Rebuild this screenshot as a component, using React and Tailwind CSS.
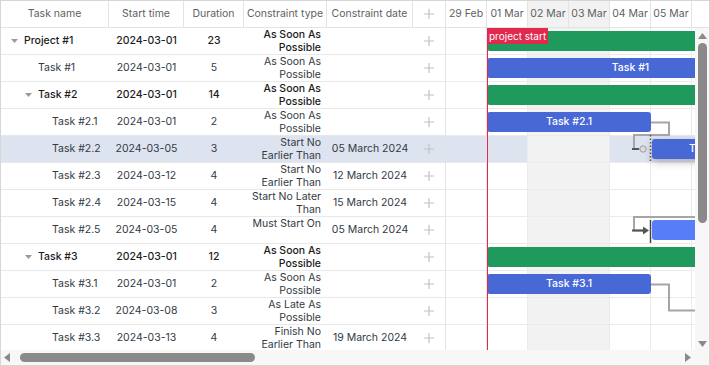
import React from 'react';

const tasks = [
  { name: 'Project #1', start: '2024-03-01', dur: 23, ct: ['As Soon As', 'Possible'], date: '', level: 0, parent: true },
  { name: 'Task #1', start: '2024-03-01', dur: 5, ct: ['As Soon As', 'Possible'], date: '', level: 1 },
  { name: 'Task #2', start: '2024-03-01', dur: 14, ct: ['As Soon As', 'Possible'], date: '', level: 1, parent: true },
  { name: 'Task #2.1', start: '2024-03-01', dur: 2, ct: ['As Soon As', 'Possible'], date: '', level: 2 },
  { name: 'Task #2.2', start: '2024-03-05', dur: 3, ct: ['Start No', 'Earlier Than'], date: '05 March 2024', level: 2, selected: true },
  { name: 'Task #2.3', start: '2024-03-12', dur: 4, ct: ['Start No', 'Earlier Than'], date: '12 March 2024', level: 2 },
  { name: 'Task #2.4', start: '2024-03-15', dur: 4, ct: ['Start No Later', 'Than'], date: '15 March 2024', level: 2 },
  { name: 'Task #2.5', start: '2024-03-05', dur: 4, ct: ['Must Start On'], date: '05 March 2024', level: 2 },
  { name: 'Task #3', start: '2024-03-01', dur: 12, ct: ['As Soon As', 'Possible'], date: '', level: 1, parent: true },
  { name: 'Task #3.1', start: '2024-03-01', dur: 2, ct: ['As Soon As', 'Possible'], date: '', level: 2 },
  { name: 'Task #3.2', start: '2024-03-08', dur: 3, ct: ['As Late As', 'Possible'], date: '', level: 2 },
  { name: 'Task #3.3', start: '2024-03-13', dur: 4, ct: ['Finish No', 'Earlier Than'], date: '19 March 2024', level: 2 },
];

// last column runs under the scrollbar, its label is not shown
const days = ['29 Feb', '01 Mar', '02 Mar', '03 Mar', '04 Mar', '05 Mar', ''];
const weekend = [2, 3];

// bars in timeline coordinates (day width 41px, row height 27px)
const bars = [
  { row: 0, left: 41, width: 420, color: 'bg-[#1f9a5c]', label: '' },
  { row: 1, left: 41, width: 287, color: 'bg-[#4868d6]', label: 'Task #1' },
  { row: 2, left: 41, width: 420, color: 'bg-[#1f9a5c]', label: '' },
  { row: 3, left: 41, width: 164, color: 'bg-[#4868d6]', label: 'Task #2.1' },
  { row: 4, left: 206, width: 123, color: 'bg-[#4868d6] shadow-[0_3px_8px_rgba(0,0,0,0.25)]', label: 'Task #2.2' },
  { row: 7, left: 206, width: 164, color: 'bg-[#587ef7]', label: '' },
  { row: 8, left: 41, width: 420, color: 'bg-[#1f9a5c]', label: '' },
  { row: 9, left: 41, width: 164, color: 'bg-[#4868d6]', label: 'Task #3.1' },
];

const PlusIcon = () => (
  <svg width="10" height="10" viewBox="0 0 10 10">
    <path d="M5 0V10M0 5H10" stroke="#c2c2c2" strokeWidth="1.2" />
  </svg>
);

const Toggle = () => (
  <svg width="7" height="4" viewBox="0 0 7 4" className="ml-[3px]">
    <path d="M0 0H7L3.5 4Z" fill="#9a9a9a" />
  </svg>
);

const GridHeader = () => (
  <div className="flex h-[27px] border-b border-[#e3e3e3] text-[#5f5f5f]">
    <div className="w-[108px] border-r border-[#e3e3e3] flex items-center justify-center">Task name</div>
    <div className="w-[75px] border-r border-[#e3e3e3] flex items-center justify-center">Start time</div>
    <div className="w-[60px] border-r border-[#e3e3e3] flex items-center justify-center">Duration</div>
    <div className="w-[83px] border-r border-[#e3e3e3] flex items-center justify-center whitespace-nowrap">Constraint type</div>
    <div className="w-[86px] border-r border-[#e3e3e3] flex items-center justify-center whitespace-nowrap">Constraint date</div>
    <div className="w-[33px] border-r border-[#e3e3e3] flex items-center justify-center"><PlusIcon /></div>
  </div>
);

const GridRow = ({ t }) => (
  <div
    className={
      'flex h-[27px] border-b border-[#e8e8e8] ' +
      (t.selected ? 'bg-[#dee3f0] ' : '') +
      (t.parent ? 'font-medium text-[#1c1c1c]' : 'text-[#333a44]')
    }
  >
    <div className="w-[108px] flex items-center pl-[7px] whitespace-nowrap">
      <div style={{ width: t.level * 14 }} />
      <div className="w-[16px] flex items-center">{t.parent && <Toggle />}</div>
      {t.name}
    </div>
    <div className="w-[75px] flex items-center justify-center">{t.start}</div>
    <div className="w-[60px] flex items-center justify-center">{t.dur}</div>
    <div className="w-[83px] flex flex-col items-end pr-[6px] leading-[13px] whitespace-nowrap">
      {t.ct.map(l => (
        <span key={l}>{l}</span>
      ))}
    </div>
    <div className="w-[86px] flex items-center justify-center font-normal text-[#333a44] whitespace-nowrap">{t.date}</div>
    <div className="w-[33px] border-r border-[#e3e3e3] flex items-center justify-center"><PlusIcon /></div>
  </div>
);

const Timeline = () => (
  <div className="w-[249px] overflow-hidden flex flex-col">
    <div className="flex h-[27px] border-b border-[#e3e3e3] text-[#5f5f5f] shrink-0">
      {days.map((d, i) => (
        <div
          key={i}
          className={
            'w-[41px] shrink-0 border-r border-[#e3e3e3] flex items-center justify-center whitespace-nowrap ' +
            (weekend.includes(i) ? 'bg-[#f2f2f2]' : '')
          }
        >
          {d}
        </div>
      ))}
    </div>
    <div className="relative flex-1">
      {tasks.map(t => (
        <div key={t.name} className="flex h-[27px] border-b border-[#ebebeb]">
          {days.map((d, i) => (
            <div
              key={i}
              className={
                'w-[41px] shrink-0 ' +
                (weekend.includes(i)
                  ? 'bg-[#f2f2f2] ' + (i === 2 ? 'border-r border-[#f2f2f2]' : 'border-r border-[#ebebeb]')
                  : (t.selected ? 'bg-[#dee3f0] ' : '') + 'border-r border-[#ebebeb]')
              }
            />
          ))}
        </div>
      ))}

      {bars.map(b => (
        <div
          key={b.row}
          className={'absolute h-[20px] rounded-[3px] flex items-center justify-center text-white font-medium whitespace-nowrap ' + b.color}
          style={{ top: b.row * 27 + 3, left: b.left, width: b.width }}
        >
          {b.label}
        </div>
      ))}

      <svg className="absolute left-0 top-0" width="249" height="330">
        {/* Task #2.1 -> Task #2.2 */}
        <path d="M205 94.5H223V107H188V121" fill="none" stroke="#a6a6a6" strokeWidth="2" />
        <path d="M186 121H193" stroke="#555" strokeWidth="2" />
        <circle cx="197" cy="121" r="3.2" fill="#dcdcdc" stroke="#9c9c9c" strokeWidth="1" />
        <path d="M204.5 107V133" stroke="#555" strokeWidth="1.5" strokeDasharray="1.5 2" />
        {/* into Task #2.5 */}
        <path d="M249 189H188V202.5H198" fill="none" stroke="#a6a6a6" strokeWidth="2" />
        <path d="M186 202.5H198" stroke="#555" strokeWidth="2" />
        <path d="M197 198.5L203 202.5L197 206.5Z" fill="#555" />
        <path d="M204.5 192V215" stroke="#444" strokeWidth="1.5" />
        {/* Task #3.1 -> next */}
        <path d="M205 256.5H223V282.5H249" fill="none" stroke="#a6a6a6" strokeWidth="2" />
      </svg>

      <div className="absolute top-0 left-[41px] w-[1px] h-full bg-[#e0294d]" />
      <div className="absolute top-0 left-[41px] h-[16px] px-[2px] bg-[#e0294d] text-white text-[10px] leading-[16px] whitespace-nowrap">
        project start
      </div>
    </div>
  </div>
);

const VScroll = () => (
  <div className="w-[14px] flex flex-col">
    <div className="h-[27px] border-b border-[#e3e3e3] shrink-0" />
    <div className="flex-1 bg-[#f7f7f7] flex flex-col items-center">
      <svg width="9" height="6" viewBox="0 0 9 6" className="mt-[5px]">
        <path d="M0 6H9L4.5 0Z" fill="#8a8a8a" />
      </svg>
      <div className="mt-[4px] w-[9px] h-[180px] rounded-full bg-[#8a8a8a]" />
      <div className="flex-1" />
      <svg width="9" height="6" viewBox="0 0 9 6" className="mb-[3px]">
        <path d="M0 0H9L4.5 6Z" fill="#8a8a8a" />
      </svg>
    </div>
  </div>
);

const HScroll = () => (
  <div className="h-[15px] bg-[#f7f7f7] flex items-center pl-[3px] pr-[18px]">
    <svg width="6" height="9" viewBox="0 0 6 9">
      <path d="M6 0V9L0 4.5Z" fill="#8a8a8a" />
    </svg>
    <div className="ml-[10px] w-[235px] h-[9px] rounded-full bg-[#8a8a8a]" />
    <div className="flex-1" />
    <svg width="6" height="9" viewBox="0 0 6 9">
      <path d="M0 0V9L6 4.5Z" fill="#8a8a8a" />
    </svg>
  </div>
);

export default function App() {
  return (
    <div className="w-[710px] h-[366px] border border-[#d6d6d6] bg-white flex flex-col overflow-hidden font-['Inter',sans-serif] text-[10.5px]">
      <div className="flex h-[349px] overflow-hidden">
        <div className="w-[445px] shrink-0">
          <GridHeader />
          {tasks.map(t => (
            <GridRow key={t.name} t={t} />
          ))}
        </div>
        <Timeline />
        <VScroll />
      </div>
      <HScroll />
    </div>
  );
}
